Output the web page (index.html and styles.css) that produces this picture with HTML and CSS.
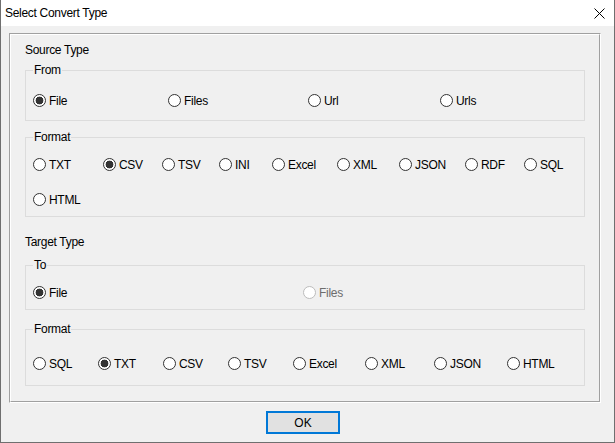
FILE: index.html
```html
<!DOCTYPE html>
<html>
<head>
<meta charset="utf-8">
<link rel="stylesheet" href="styles.css">
</head>
<body>
<div class="window">
  <div class="titlebar">
    <span class="title">Select Convert Type</span>
    <svg class="close" width="11" height="11" viewBox="0 0 11 11"><path d="M0.5 0.5 L10.5 10.5 M10.5 0.5 L0.5 10.5" stroke="#000" stroke-width="1" fill="none"/></svg>
  </div>
  <div class="client">
    <div class="panel">
      <div class="panel-inner">
        <div class="section-label">Source Type</div>
        <fieldset class="group g-from">
          <legend>From</legend>
          <div class="opts cols-from">
            <label class="opt"><span class="radio checked"></span>File</label>
            <label class="opt"><span class="radio"></span>Files</label>
            <label class="opt"><span class="radio"></span>Url</label>
            <label class="opt"><span class="radio"></span>Urls</label>
          </div>
        </fieldset>
        <fieldset class="group g-sformat">
          <legend>Format</legend>
          <div class="opts cols-sformat">
            <label class="opt"><span class="radio"></span>TXT</label>
            <label class="opt"><span class="radio checked"></span>CSV</label>
            <label class="opt"><span class="radio"></span>TSV</label>
            <label class="opt"><span class="radio"></span>INI</label>
            <label class="opt"><span class="radio"></span>Excel</label>
            <label class="opt"><span class="radio"></span>XML</label>
            <label class="opt"><span class="radio"></span>JSON</label>
            <label class="opt"><span class="radio"></span>RDF</label>
            <label class="opt"><span class="radio"></span>SQL</label>
            <label class="opt"><span class="radio"></span>HTML</label>
          </div>
        </fieldset>
        <div class="section-label target-label">Target Type</div>
        <fieldset class="group g-to">
          <legend>To</legend>
          <div class="opts cols-to">
            <label class="opt"><span class="radio checked"></span>File</label>
            <label class="opt disabled"><span class="radio"></span>Files</label>
          </div>
        </fieldset>
        <fieldset class="group g-tformat">
          <legend>Format</legend>
          <div class="opts cols-tformat">
            <label class="opt"><span class="radio"></span>SQL</label>
            <label class="opt"><span class="radio checked"></span>TXT</label>
            <label class="opt"><span class="radio"></span>CSV</label>
            <label class="opt"><span class="radio"></span>TSV</label>
            <label class="opt"><span class="radio"></span>Excel</label>
            <label class="opt"><span class="radio"></span>XML</label>
            <label class="opt"><span class="radio"></span>JSON</label>
            <label class="opt"><span class="radio"></span>HTML</label>
          </div>
        </fieldset>
      </div>
    </div>
    <div class="footer">
      <button class="btn">OK</button>
    </div>
  </div>
</div>
</body>
</html>
```
FILE: styles.css
```css
* { box-sizing: border-box; }
html, body { margin: 0; padding: 0; }
body {
  font-family: "Liberation Sans", Arial, sans-serif;
  font-size: 12px;
  color: #000;
  background: #f0f0f0;
}
.window {
  width: 615px;
  height: 443px;
  border: 1px solid #6f6f6f;
  border-top: none;
  background: #f0f0f0;
  display: flex;
  flex-direction: column;
}
.titlebar {
  height: 26px;
  background: #fff;
  display: flex;
  align-items: center;
  justify-content: space-between;
  padding-left: 4px;
  padding-right: 9px;
}
.title { line-height: 26px; letter-spacing: -0.3px; }
.close { display: block; }
.client {
  flex: 1;
  padding: 7px 0 0 8px;
}
.panel {
  width: 592px;
  height: 370px;
  border: 1px solid;
  border-color: #a0a0a0 #fff #fff #a0a0a0;
}
.panel-inner {
  height: 100%;
  border: 1px solid;
  border-color: #fff #a0a0a0 #a0a0a0 #fff;
  padding: 7px 14px 0 14px;
}
.section-label { line-height: 16px; letter-spacing: -0.3px; }
.target-label { margin-top: 17px; }
.group {
  margin: 0;
  border: 1px solid #dcdcdc;
  padding: 0 0 0 7px;
  min-width: 0;
}
.group legend {
  padding: 0 1px;
  line-height: 16px;
  letter-spacing: -0.3px;
}
.g-from { margin-top: 4px; padding-bottom: 10px; }
.g-from .opts { margin-top: 12px; }
.g-sformat { margin-top: 8px; padding-bottom: 7px; }
.g-sformat .opts { margin-top: 9px; }
.g-to { margin-top: 7px; padding-bottom: 7px; }
.g-to .opts { margin-top: 9px; }
.g-tformat { margin-top: 11px; padding-bottom: 12px; }
.g-tformat .opts { margin-top: 16px; }
.opts {
  display: grid;
  grid-auto-rows: 20px;
  row-gap: 15px;
}
.cols-from { grid-template-columns: 135px 140px 132px auto; }
.cols-sformat { grid-template-columns: 70px 59px 57px 53px 65px 62px 66px 59px auto; }
.cols-to { grid-template-columns: 270px auto; }
.cols-tformat { grid-template-columns: 65px 65px 65px 65px 72px 69px 73px auto; }
.opt {
  display: flex;
  align-items: center;
  gap: 3px;
  white-space: nowrap;
  letter-spacing: -0.3px;
  padding-top: 1px;
}
.radio {
  width: 13px;
  height: 13px;
  flex: none;
  border: 1px solid #333;
  border-radius: 50%;
  background: #fff;
}
.radio.checked {
  background: radial-gradient(circle, #333 0, #333 3.6px, #fff 4.2px);
}
.opt.disabled { color: #6d6d6d; }
.opt.disabled .radio { border-color: #bcbcbc; }
.footer {
  padding: 8px 0 0 257px;
}
.btn {
  width: 74px;
  height: 23px;
  margin: 0;
  padding: 0;
  border: 2px solid #0078d7;
  background: #e1e1e1;
  font-family: "Liberation Sans", Arial, sans-serif;
  font-size: 12px;
  color: #000;
  display: block;
}
```
